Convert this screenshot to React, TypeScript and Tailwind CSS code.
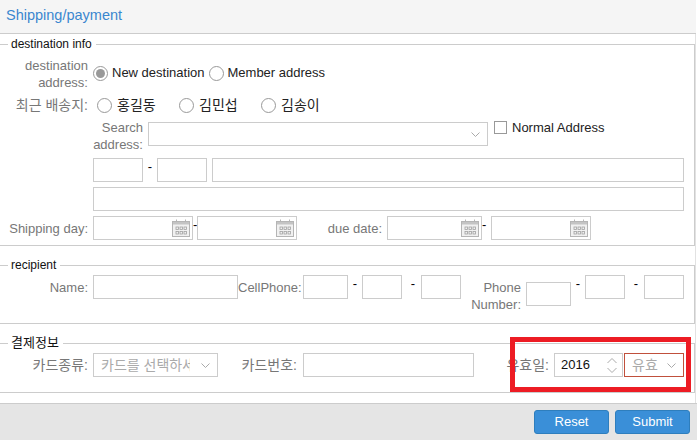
const font = "font-['Liberation_Sans','Noto_Sans_CJK_KR',sans-serif]";

function Field({ className = "" }: { className?: string }) {
  return <input className={`h-6 shrink-0 border border-[#ccc] bg-white outline-none ${className}`} />;
}

function Chevron() {
  return (
    <svg width="9" height="5" viewBox="0 0 9 5" fill="none" stroke="#aaa" strokeWidth="1">
      <path d="M0.5 0.5l4 4 4-4" />
    </svg>
  );
}

function Calendar() {
  return (
    <svg width="18" height="18" viewBox="0 0 18 18" className="absolute right-[2px] top-[2px]" fill="none">
      <path d="M4.5 0.5v3M13.5 0.5v3" stroke="#b5b5b5" />
      <rect x="0.5" y="2.5" width="17" height="15" fill="#f1f1f1" stroke="#b5b5b5" />
      <rect x="1" y="3" width="16" height="2.5" fill="#c4c4c4" />
      <rect x="4" y="8" width="2.5" height="2.5" stroke="#a0a0a0" strokeWidth="0.8" />
      <rect x="8" y="8" width="2.5" height="2.5" stroke="#a0a0a0" strokeWidth="0.8" />
      <rect x="12" y="8" width="2.5" height="2.5" stroke="#a0a0a0" strokeWidth="0.8" />
      <rect x="4" y="12.5" width="2.5" height="2.5" stroke="#a0a0a0" strokeWidth="0.8" />
      <rect x="8" y="12.5" width="2.5" height="2.5" stroke="#a0a0a0" strokeWidth="0.8" />
      <rect x="12" y="12.5" width="2.5" height="2.5" stroke="#a0a0a0" strokeWidth="0.8" />
    </svg>
  );
}

function DateField({ width }: { width: string }) {
  return (
    <div className={`relative h-6 shrink-0 border border-[#ccc] bg-white ${width}`}>
      <Calendar />
    </div>
  );
}

function Radio({ checked = false, label, className = "" }: { checked?: boolean; label: React.ReactNode; className?: string }) {
  return (
    <label className={`flex items-center gap-[4px] text-[#222] ${className}`}>
      <span className="flex h-[15px] w-[15px] shrink-0 items-center justify-center rounded-full border border-[#999] bg-white">
        {checked && <span className="h-[9px] w-[9px] rounded-full bg-[#999]" />}
      </span>
      {label}
    </label>
  );
}

function Label({ children, className = "w-[88px] mr-[5px]" }: { children: React.ReactNode; className?: string }) {
  return <span className={`shrink-0 text-right leading-[17px] text-[#777] ${className}`}>{children}</span>;
}

function Dash({ className = "" }: { className?: string }) {
  return <span className={`shrink-0 self-start leading-[17px] text-black ${className}`}>-</span>;
}

function Legend({ children, className = "text-[12px]" }: { children: React.ReactNode; className?: string }) {
  return <legend className={`ml-2 h-5 pl-[3px] pr-[4px] leading-[20px] text-[#111] ${className}`}>{children}</legend>;
}

export default function App() {
  return (
    <div className={`relative h-[440px] w-[697px] overflow-hidden bg-white text-[13px] ${font}`}>
      <div className="h-[34px] w-[696px] border-b border-[#ccc] bg-[#f5f5f5] pl-[6px] text-[14.5px] leading-[30px] text-[#3a87cf]">
        Shipping/payment
      </div>

      <div className="h-[369px] w-[696px] border-r border-[#e2e2e2]">
        <fieldset className="h-[212px] w-[695px] border-t border-r border-b border-[#ccc]">
          <Legend>destination info</Legend>
          <div className="mt-[3px] flex h-[32px] items-center">
            <Label className="mr-[5px] w-[88px] pt-[1px]">
              destination
              <br />
              address:
            </Label>
            <Radio checked label="New destination" className="mr-[4px]" />
            <Radio label="Member address" />
          </div>
          <div className="flex h-[32px] items-center">
            <Label className="mr-[5px] w-[88px] text-[14px]">최근 배송지:</Label>
            <div className="ml-[4px] flex text-[14px]">
              <Radio label={<span className="ml-[1px]">홍길동</span>} className="w-[82px]" />
              <Radio label={<span className="ml-[1px]">김민섭</span>} className="w-[82px]" />
              <Radio label={<span className="ml-[1px]">김송이</span>} className="w-[82px]" />
            </div>
          </div>
          <div className="flex h-[36px] items-start">
            <Label className="mr-[5px] mt-[-2px] w-[143px]">
              Search
              <br />
              address:
            </Label>
            <div className="mt-[1px] flex h-6 w-[340px] shrink-0 items-center justify-end border border-[#ccc] pr-[7px]">
              <Chevron />
            </div>
            <span className="ml-[6px] h-[13px] w-[13px] shrink-0 border border-[#999] bg-white" />
            <span className="ml-[5px] mt-[-2px] leading-[17px] text-[#222]">Normal Address</span>
          </div>
          <div className="mt-[1px] flex pl-[93px]">
            <Field className="w-[50px]" />
            <Dash className="w-[14px] text-center" />
            <Field className="w-[50px]" />
            <Field className="ml-[5px] w-[472px]" />
          </div>
          <div className="mt-[5px] pl-[93px]">
            <Field className="w-[591px]" />
          </div>
          <div className="mt-[5px] flex items-center">
            <Label>Shipping day:</Label>
            <DateField width="w-[100px]" />
            <Dash className="w-[4px]" />
            <DateField width="w-[100px]" />
            <Label className="ml-[27px] mr-[5px] w-[58px]">due date:</Label>
            <DateField width="w-[95px]" />
            <Dash className="w-[9px]" />
            <DateField width="w-[100px]" />
          </div>
        </fieldset>

        <fieldset className="mt-[9px] h-[69px] w-[695px] border-t border-r border-b border-[#ccc]">
          <Legend>recipient</Legend>
          <div className="flex">
            <Label className="mr-[5px] mt-[4px] w-[88px]">Name:</Label>
            <Field className="w-[145px]" />
            <Label className="mr-[3px] mt-[4px] w-[62px]">CellPhone:</Label>
            <Field className="w-[45px]" />
            <Dash className="w-[14px] text-center" />
            <Field className="w-[40px]" />
            <Dash className="w-[19px] pl-[3px] text-center" />
            <Field className="w-[40px]" />
            <Label className="mr-[5px] mt-[4px] w-[60px]">
              Phone
              <br />
              Number:
            </Label>
            <Field className="mt-[7px] w-[45px]" />
            <Dash className="w-[14px] text-center" />
            <Field className="w-[40px]" />
            <Dash className="w-[19px] pl-[3px] text-center" />
            <Field className="w-[40px]" />
          </div>
        </fieldset>

        <fieldset className="mt-[9px] h-[60px] w-[695px] border-t border-r border-b border-[#ccc]">
          <Legend className="text-[13px]">결제정보</Legend>
          <div className="flex items-center">
            <Label className="mr-[5px] w-[88px] text-[14px]">카드종류:</Label>
            <div className="flex h-6 w-[125px] shrink-0 items-center justify-between border border-[#ccc] pl-[7px] pr-[7px] text-[14px] text-[#aaa]">
              <span className="w-[89px] overflow-hidden whitespace-nowrap">카드를 선택하세요</span>
              <Chevron />
            </div>
            <Label className="mr-[6px] w-[79px] text-[14px]">카드번호:</Label>
            <Field className="w-[171px]" />
            <Label className="mr-[5px] w-[75px] text-[14px]">유효일:</Label>
            <div className="flex h-6 w-[69px] shrink-0 items-center justify-between border border-[#ccc] pl-[6px] pr-[5px] text-[#111]">
              2016
              <svg width="10" height="15" viewBox="0 0 10 15" fill="none" stroke="#aaa" strokeWidth="1">
                <path d="M0.5 5l4.5-4.5L9.5 5M0.5 10l4.5 4.5L9.5 10" />
              </svg>
            </div>
            <div className="ml-[1px] flex h-6 w-[60px] shrink-0 items-center justify-between border border-[#c0503c] pl-[7px] pr-[7px] text-[14px] text-[#aaa]">
              유효
              <Chevron />
            </div>
          </div>
        </fieldset>
      </div>

      <div className="flex h-[37px] w-full justify-end gap-[6px] border-t border-[#ccc] bg-[#e5e5e5] pr-[7px] pt-[6px]">
        <button className="h-6 w-[75px] rounded-[3px] border border-[#2e7ebd] bg-[#3a8fd8] text-[13px] text-white">
          Reset
        </button>
        <button className="h-6 w-[75px] rounded-[3px] border border-[#2e7ebd] bg-[#3a8fd8] text-[13px] text-white">
          Submit
        </button>
      </div>

      {/* red annotation box drawn over the form */}
      <div className="absolute left-[510px] top-[337px] h-[55px] w-[181px] border-[5px] border-[#ed1c24]" />
    </div>
  );
}
